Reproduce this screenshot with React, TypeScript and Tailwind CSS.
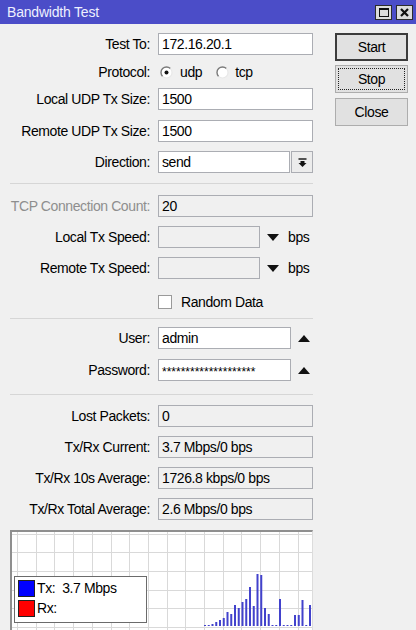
import React from 'react';

const bars = [1, 1, 2, 4, 6, 8, 14, 12, 21, 18, 24, 27, 39, 20, 52, 51, 18, 12, 1, 1, 27, 1, 1, 1, 11, 11, 26, 1, 21];

function Radio({ on }: { on?: boolean }) {
  return (
    <svg width="13" height="13" viewBox="0 0 13 13">
      <circle cx="6.5" cy="6.5" r="5.5" fill="#fff" />
      <path d="M2.6 10.4 A5.5 5.5 0 0 1 10.4 2.6" fill="none" stroke="#7a7a7a" strokeWidth="1.4" />
      <path d="M10.4 2.6 A5.5 5.5 0 0 1 2.6 10.4" fill="none" stroke="#e8e8e8" strokeWidth="1.2" />
      {on && <circle cx="6.5" cy="6.5" r="2" fill="#111" />}
    </svg>
  );
}

function Row({ label, mt, dim, children }: { label: string; mt: string; dim?: boolean; children: React.ReactNode }) {
  return (
    <div className={`flex items-center h-[22px] ${mt}`}>
      <div className={`w-[140px] text-right whitespace-nowrap ${dim ? 'text-[#8e8e8e]' : 'text-black'}`}>{label}</div>
      <div className="ml-[8px] flex items-center">{children}</div>
    </div>
  );
}

function Field({ w, value, ro, children }: { w: string; value?: string; ro?: boolean; children?: React.ReactNode }) {
  return (
    <div className={`h-[22px] ${w} border border-[#abadb3] pl-[3px] flex items-center whitespace-nowrap overflow-hidden ${ro ? 'bg-[#f0f0f0]' : 'bg-white'}`}>
      {value}
      {children}
    </div>
  );
}

function Sep({ mt }: { mt: string }) {
  return <div className={`h-px w-[303px] bg-[#d6d6d6] ${mt}`} />;
}

function TriDown() {
  return (
    <svg width="12" height="7" viewBox="0 0 12 7" className="ml-[7px]">
      <path d="M0 0 H12 L6 7 Z" fill="#111" />
    </svg>
  );
}

function TriUp() {
  return (
    <svg width="12" height="7" viewBox="0 0 12 7" className="ml-[7px]">
      <path d="M0 7 H12 L6 0 Z" fill="#111" />
    </svg>
  );
}

function Chart() {
  const vs = Array.from({ length: 17 }, (_, k) => 5 + k * 18.7);
  const hs = Array.from({ length: 6 }, (_, k) => 1.5 + k * 18.7);
  return (
    <div className="relative mt-[10px] w-[303px] h-[100px] border-t-2 border-l-2 border-[#8f8f8f] border-r border-r-[#dcdcdc] bg-white overflow-hidden">
      <svg width="301" height="98" className="block">
        {vs.map((x) => (
          <line key={'v' + x} x1={Math.round(x) + 0.5} y1="0" x2={Math.round(x) + 0.5} y2="98" stroke="#d9d9d9" strokeWidth="1" />
        ))}
        {hs.map((y) => (
          <line key={'h' + y} x1="0" y1={Math.round(y) + 0.5} x2="301" y2={Math.round(y) + 0.5} stroke="#d9d9d9" strokeWidth="1" />
        ))}
        {bars.map((h, i) => (
          <rect key={i} x={192 + i * 3.75} y={94 - h} width="2" height={h} fill="#4242cc" />
        ))}
      </svg>
      <div className="absolute left-[2px] top-[44px] w-[133px] h-[47px] border border-[#6b6b6b] bg-white pl-[3px] pt-[3px] flex flex-col gap-[3px]">
        <div className="flex items-center h-[17px]">
          <div className="w-[17px] h-[17px] bg-[#0000ff] border border-[#222]" />
          <span className="ml-[2px] whitespace-pre">Tx:  3.7 Mbps</span>
        </div>
        <div className="flex items-center h-[17px]">
          <div className="w-[17px] h-[17px] bg-[#ff0000] border border-[#222]" />
          <span className="ml-[2px]">Rx:</span>
        </div>
      </div>
    </div>
  );
}

export default function App() {
  return (
    <div className="w-[416px] h-[630px] overflow-hidden bg-[#f0f0f0] text-[14px] tracking-[-0.4px] font-['Liberation_Sans',Arial,sans-serif] text-black flex flex-col">
      {/* title bar */}
      <div className="h-[24px] bg-[#4b4dc8] flex items-center pl-[7px] pr-[3px] shrink-0">
        <span className="text-[#eef0ff] text-[14px] tracking-[-0.2px]">Bandwidth Test</span>
        <div className="ml-auto flex items-center gap-[4px]">
          <div className="w-[17px] h-[15px] bg-[#dcdcdc] border border-[#2c2c2c] flex items-center justify-center">
            <div className="w-[10px] h-[9px] border border-[#111] border-t-2" />
          </div>
          <div className="w-[17px] h-[15px] bg-[#dcdcdc] border border-[#2c2c2c] flex items-center justify-center">
            <svg width="9" height="9" viewBox="0 0 9 9">
              <path d="M1 1 L8 8 M8 1 L1 8" stroke="#111" strokeWidth="2.2" />
            </svg>
          </div>
        </div>
      </div>

      <div className="flex flex-1 min-h-0">
        {/* form column */}
        <div className="w-[313px] pl-[10px] flex flex-col">
          <Row label="Test To:" mt="mt-[9px]">
            <Field w="w-[155px]" value="172.16.20.1" />
          </Row>
          <Row label="Protocol:" mt="mt-[6px]">
            <div className="flex items-center ml-[2px]">
              <Radio on />
              <span className="ml-[7px]">udp</span>
              <div className="ml-[14px]"><Radio /></div>
              <span className="ml-[6px]">tcp</span>
            </div>
          </Row>
          <Row label="Local UDP Tx Size:" mt="mt-[5px]">
            <Field w="w-[155px]" value="1500" />
          </Row>
          <Row label="Remote UDP Tx Size:" mt="mt-[10px]">
            <Field w="w-[155px]" value="1500" />
          </Row>
          <Row label="Direction:" mt="mt-[9px]">
            <Field w="w-[132px]" value="send" />
            <div className="ml-[1px] w-[22px] h-[22px] border border-[#abadb3] bg-[#ececec] flex items-center justify-center">
              <svg width="9" height="9" viewBox="0 0 9 9">
                <path d="M0.5 1 H8.5" stroke="#111" strokeWidth="1.4" />
                <path d="M2.5 3 H6.5 V5 H8.5 L4.5 9 L0.5 5 H2.5 Z" fill="#111" />
              </svg>
            </div>
          </Row>
          <Sep mt="mt-[10px]" />
          <Row label="TCP Connection Count:" mt="mt-[11px]" dim>
            <Field w="w-[155px]" value="20" ro />
          </Row>
          <Row label="Local Tx Speed:" mt="mt-[9px]">
            <Field w="w-[102px]" ro />
            <TriDown />
            <span className="ml-[9px]">bps</span>
          </Row>
          <Row label="Remote Tx Speed:" mt="mt-[9px]">
            <Field w="w-[102px]" ro />
            <TriDown />
            <span className="ml-[9px]">bps</span>
          </Row>
          <div className="flex items-center h-[22px] mt-[12px] pl-[148px]">
            <div className="w-[14px] h-[14px] bg-white border border-[#9a9a9a]" />
            <span className="ml-[9px]">Random Data</span>
          </div>
          <Sep mt="mt-[5px]" />
          <Row label="User:" mt="mt-[8px]">
            <Field w="w-[133px]" value="admin" />
            <TriUp />
          </Row>
          <Row label="Password:" mt="mt-[10px]">
            <Field w="w-[133px]">
              <span className="text-[12px] tracking-[0px] leading-none pt-[3px]">********************</span>
            </Field>
            <TriUp />
          </Row>
          <Sep mt="mt-[13px]" />
          <Row label="Lost Packets:" mt="mt-[10px]">
            <Field w="w-[155px]" value="0" ro />
          </Row>
          <Row label="Tx/Rx Current:" mt="mt-[9px]">
            <Field w="w-[155px]" value="3.7 Mbps/0 bps" ro />
          </Row>
          <Row label="Tx/Rx 10s Average:" mt="mt-[9px]">
            <Field w="w-[155px]" value="1726.8 kbps/0 bps" ro />
          </Row>
          <Row label="Tx/Rx Total Average:" mt="mt-[9px]">
            <Field w="w-[155px]" value="2.6 Mbps/0 bps" ro />
          </Row>
          <Chart />
        </div>

        {/* buttons column */}
        <div className="ml-[22px] w-[73px] flex flex-col">
          <button className="mt-[9px] h-[28px] w-[73px] border-2 border-[#3c3c3c] bg-[#e1e1e1] flex items-center justify-center">
            Start
          </button>
          <button className="mt-[4px] h-[28px] w-[73px] border border-[#adadad] bg-[#e1e1e1] p-[2px]">
            <div className="w-full h-full border border-dotted border-[#222] flex items-center justify-center">Stop</div>
          </button>
          <button className="mt-[5px] h-[28px] w-[73px] border border-[#adadad] bg-[#e1e1e1] flex items-center justify-center">
            Close
          </button>
        </div>
      </div>
    </div>
  );
}
